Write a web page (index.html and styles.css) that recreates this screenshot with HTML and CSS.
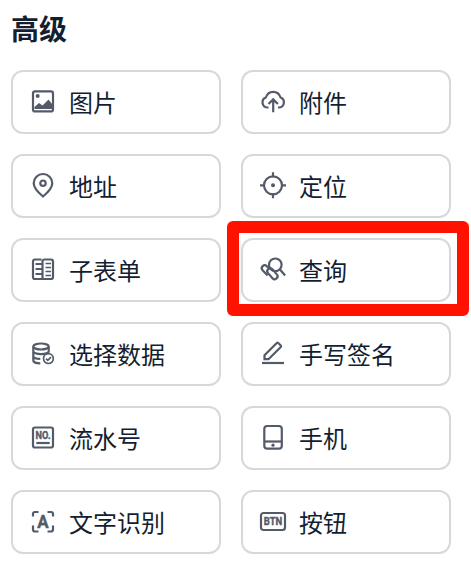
FILE: index.html
```html
<!DOCTYPE html>
<html lang="zh-CN">
<head>
  <meta charset="UTF-8">
  <meta name="viewport" content="width=device-width, initial-scale=1.0">
  <title>高级</title>
  <link rel="stylesheet" href="styles.css">
</head>
<body>
  <h2 class="title">高级</h2>

  <div class="fields">
    <div class="field">
      <svg class="icon" viewBox="0 0 28 28">
        <rect x="4" y="3.4" width="20" height="20" rx="2"/>
        <circle class="fill" cx="8.7" cy="8" r="2"/>
        <path class="fill" d="M5.500 21v-2l4.500-4 3.500 2.500 6-6L23 16v5z"/>
      </svg>
      <span>图片</span>
    </div>
    <div class="field">
      <svg class="icon" viewBox="0 0 28 28">
        <path d="M9.5 19.500H8.200A5.200 5.200 0 0 1 6.800 9.500C8 6 10.700 3.800 14.200 3.800S20.400 6 21.600 9.500A5.200 5.200 0 0 1 20.200 19.500H19"/>
        <path d="M14.200 24.300V11.500M9.500 16l4.700-4.600 4.700 4.600"/>
      </svg>
      <span>附件</span>
    </div>
    <div class="field">
      <svg class="icon" viewBox="0 0 28 28">
        <path d="M14 24.500C9.500 20.800 4.700 16.500 4.700 11.300a9.300 9.300 0 0 1 18.600 0C23.300 16.500 18.500 20.800 14 24.500z"/>
        <circle cx="14" cy="11.200" r="2.700"/>
      </svg>
      <span>地址</span>
    </div>
    <div class="field">
      <svg class="icon" viewBox="0 0 28 28">
        <circle cx="14" cy="13.300" r="9"/>
        <circle class="fill" cx="14" cy="13.300" r="2"/>
        <path d="M14 .3v5M14 21.300v5M1 13.300h5M22 13.300h5"/>
      </svg>
      <span>定位</span>
    </div>
    <div class="field">
      <svg class="icon" viewBox="0 0 28 28">
        <path d="M12.500 3.500H6a2 2 0 0 0-2 2V21a2 2 0 0 0 2 2h16a2 2 0 0 0 2-2V5.500a2 2 0 0 0-2-2h-6.500a2 2 0 0 0-2 2V23"/>
        <path d="M6.500 8h7M6.500 13h7M6.500 18h7"/>
        <path class="thin" d="M16.500 7.500H22M16.500 11.500H22M16.500 15.500H22M16.500 19.500H22"/>
      </svg>
      <span>子表单</span>
    </div>
    <div class="field">
      <svg class="icon" viewBox="0 0 28 28">
        <circle cx="16.300" cy="8.800" r="6.300"/>
        <path d="M20.800 13.300l5.300 6.200"/>
        <path d="M10 12.500l-2.200-2.300a2.900 2.900 0 0 0-4.200 4l5 5.200"/>
        <rect x="7.200" y="14.800" width="12.500" height="5.800" rx="2.900" transform="rotate(49 13.400 17.700)"/>
      </svg>
      <span>查询</span>
      <div class="highlight"></div>
    </div>
    <div class="field">
      <svg class="icon" viewBox="0 0 28 28">
        <ellipse cx="12" cy="6.500" rx="7.700" ry="3"/>
        <path d="M4.300 6.500v14c0 1.500 3 2.800 7 2.900M19.700 6.500v5M4.300 11.200c0 1.700 3.400 3 7.700 3s7.700-1.300 7.700-3M4.300 15.900c0 1.600 3 2.800 7 2.900"/>
        <circle class="thin" cx="19.400" cy="18.600" r="4.900"/>
        <path class="thin" d="M17 18.600l1.800 1.800 3.200-3.300"/>
      </svg>
      <span>选择数据</span>
    </div>
    <div class="field">
      <svg class="icon" viewBox="0 0 28 28">
        <path d="M5.500 19.200v-4L17.800 3a1 1 0 0 1 1.400 0l2.600 2.500a1 1 0 0 1 0 1.400L9.500 19.200z"/>
        <path d="M3 23h22"/>
      </svg>
      <span>手写签名</span>
    </div>
    <div class="field">
      <svg class="icon" viewBox="0 0 28 28">
        <rect x="4" y="3.500" width="20" height="20" rx="2"/>
        <text x="6.600" y="15.400" font-size="10.500" textLength="15" lengthAdjust="spacingAndGlyphs">NO.</text>
        <path d="M7.300 19h13.400"/>
      </svg>
      <span>流水号</span>
    </div>
    <div class="field">
      <svg class="icon" viewBox="0 0 28 28">
        <rect x="5.300" y="2" width="17.500" height="22.700" rx="3"/>
        <path d="M5.500 17.500h17"/>
        <circle class="fill" cx="14" cy="21.200" r="1.600"/>
      </svg>
      <span>手机</span>
    </div>
    <div class="field">
      <svg class="icon" viewBox="0 0 28 28">
        <path d="M4 8.500V6a2 2 0 0 1 2-2h3.500M18.500 4H22a2 2 0 0 1 2 2v2.500M24 17.500v4a2 2 0 0 1-2 2h-3.500M9.500 23.500H6a2 2 0 0 1-2-2v-4"/>
        <text x="8.300" y="19.800" font-size="17.500" textLength="11.400" lengthAdjust="spacingAndGlyphs">A</text>
      </svg>
      <span>文字识别</span>
    </div>
    <div class="field">
      <svg class="icon" viewBox="0 0 28 28">
        <rect x="2" y="5" width="24" height="17" rx="2.500"/>
        <text x="4.800" y="17.200" font-size="10.500" textLength="18.400" lengthAdjust="spacingAndGlyphs">BTN</text>
      </svg>
      <span>按钮</span>
    </div>
  </div>
</body>
</html>
```
FILE: styles.css
```css
* {
  box-sizing: border-box;
}
body {
  margin: 0;
  padding: 8px 20px 20px 11px;
  background-color: #fff;
  color: #141e31;
  font-family: "Noto Sans CJK SC", sans-serif;
}
.title {
  margin: 0 0 22px;
  font-size: 28px;
  line-height: 40px;
  font-weight: bold;
}
.fields {
  display: grid;
  grid-template-columns: 1fr 1fr;
  gap: 20px;
}
.field {
  position: relative;
  display: flex;
  align-items: center;
  gap: 12px;
  height: 64px;
  padding: 0 16px;
  border: 2px solid #d8d8dc;
  border-radius: 12px;
  font-size: 24px;
  line-height: 36px;
}
.icon {
  width: 28px;
  height: 28px;
  fill: none;
  stroke: #535b69;
  stroke-width: 2.2;
}
.icon .thin {
  stroke-width: 1.7;
}
.icon .fill {
  fill: #535b69;
  stroke: none;
}
.icon text {
  fill: #535b69;
  stroke-width: 0.4;
  font-family: Roboto, sans-serif;
  font-weight: bold;
}
/* red frame around the selected field */
.highlight {
  position: absolute;
  top: -19px;
  left: -16px;
  width: 242px;
  height: 95px;
  border: 12px solid #ff1200;
  border-radius: 6px;
}
```
